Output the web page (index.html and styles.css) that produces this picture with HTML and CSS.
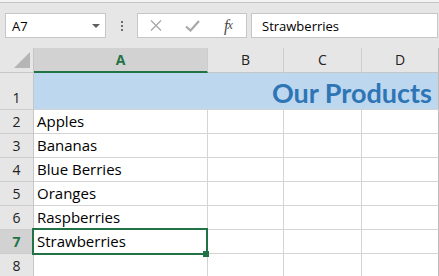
FILE: index.html
```html
<!DOCTYPE html>
<html>
<head>
<meta charset="utf-8">
<link rel="stylesheet" href="styles.css">
</head>
<body>
<div class="window">
  <div class="topline"></div>
  <div class="fbar">
    <div class="namebox">
      <span class="ref">A7</span>
      <svg class="caret" width="8" height="4" viewBox="0 0 8 4"><polygon points="0,0 8,0 4,4" fill="#5f5f5f"/></svg>
    </div>
    <div class="grip"><i></i><i></i><i></i></div>
    <div class="fxbox">
      <span class="slot">
        <svg width="12" height="11" viewBox="0 0 12 11"><path d="M1 0.5 L11 10.5 M11 0.5 L1 10.5" stroke="#a8a8a8" stroke-width="1.3" fill="none"/></svg>
      </span>
      <span class="slot">
        <svg width="15" height="12" viewBox="0 0 15 12"><path d="M1 6.5 L5.5 10.5 L14 1" stroke="#a8a8a8" stroke-width="2.2" fill="none"/></svg>
      </span>
      <span class="slot fx"><i>f</i><i class="x">x</i></span>
    </div>
    <div class="finput">Strawberries</div>
  </div>
  <div class="sheet">
    <div class="corner"><svg width="16" height="16" viewBox="0 0 16 16"><polygon points="16,0 16,16 0,16" fill="#b5b5b5"/></svg></div>
    <div class="ch sel">A</div>
    <div class="ch">B</div>
    <div class="ch">C</div>
    <div class="ch last">D</div>

    <div class="rh tall">1</div>
    <div class="title">Our Products</div>

    <div class="rh">2</div><div class="c">Apples</div><div class="c"></div><div class="c"></div><div class="c last"></div>
    <div class="rh">3</div><div class="c">Bananas</div><div class="c"></div><div class="c"></div><div class="c last"></div>
    <div class="rh">4</div><div class="c">Blue Berries</div><div class="c"></div><div class="c"></div><div class="c last"></div>
    <div class="rh">5</div><div class="c">Oranges</div><div class="c"></div><div class="c"></div><div class="c last"></div>
    <div class="rh">6</div><div class="c">Raspberries</div><div class="c"></div><div class="c"></div><div class="c last"></div>
    <div class="rh sel">7</div><div class="c">Strawberries</div><div class="c"></div><div class="c"></div><div class="c last"></div>
    <div class="rh">8</div><div class="c"></div><div class="c"></div><div class="c"></div><div class="c last"></div>

    <div class="selection"></div>
    <div class="handle"></div>
  </div>
</div>
</body>
</html>
```

FILE: styles.css
```css
* { box-sizing: border-box; }
html, body { margin: 0; padding: 0; }
body {
  width: 439px;
  height: 276px;
  overflow: hidden;
  background: #e6e6e6;
  font-family: "Open Sans", "Noto Sans", sans-serif;
}
.window { width: 439px; height: 276px; background: #e6e6e6; }
.topline {
  height: 3px;
  background: #f3f3f3;
  border-bottom: 1px solid #c4c4c4;
}
.fbar {
  display: flex;
  align-items: stretch;
  height: 45px;
  padding: 10px 1px 10px 5px;
}
.namebox {
  width: 101px;
  background: #fff;
  border: 1px solid #c6c6c6;
  display: flex;
  align-items: center;
  justify-content: space-between;
  padding: 0 5px 0 6px;
  font-size: 13px;
  color: #000;
}
.caret { display: block; }
.grip {
  width: 31px;
  display: flex;
  flex-direction: column;
  align-items: center;
  justify-content: center;
  gap: 2px;
}
.grip i {
  display: block;
  width: 2px;
  height: 2px;
  background: #6e6e6e;
}
.fxbox {
  width: 110px;
  background: #fff;
  border: 1px solid #c6c6c6;
  display: flex;
  align-items: center;
}
.slot {
  width: 36px;
  display: flex;
  justify-content: center;
  align-items: center;
}
.slot svg { display: block; }
.fx {
  font-family: "Liberation Serif", serif;
  font-size: 16px;
  color: #4a4a4a;
  letter-spacing: -1px;
}
.fx .x { font-size: 12px; }
.finput {
  flex: 1;
  margin-left: 4px;
  background: #fff;
  border: 1px solid #c6c6c6;
  font-size: 13px;
  color: #000;
  display: flex;
  align-items: center;
  padding-left: 10px;
}
.sheet {
  position: relative;
  display: grid;
  grid-template-columns: 34px 174px 76px 78px 77px;
  grid-template-rows: 25px 37px repeat(7, 24px);
  background: #fff;
}
.corner {
  background: #e6e6e6;
  border-right: 1px solid #c6c6c6;
  border-bottom: 1px solid #c6c6c6;
  display: flex;
  align-items: flex-end;
  justify-content: flex-end;
  padding: 0 3px 4px 0;
}
.corner svg { display: block; }
.ch {
  background: #e6e6e6;
  border-right: 1px solid #cdcdcd;
  border-bottom: 1px solid #c6c6c6;
  text-align: center;
  font-size: 14px;
  line-height: 24px;
  color: #222;
}
.ch.sel {
  background: #d2d2d2;
  color: #217346;
  font-weight: bold;
  border-bottom: 2px solid #217346;
  line-height: 23px;
}
.ch.last { border-right: 1px solid #bcbcbc; }
.rh {
  background: #e6e6e6;
  border-right: 1px solid #c6c6c6;
  border-bottom: 1px solid #cdcdcd;
  font-size: 14px;
  line-height: 23px;
  text-align: center;
  color: #222;
}
.rh.tall {
  display: flex;
  align-items: flex-end;
  justify-content: center;
}
.rh.sel {
  background: #d2d2d2;
  color: #217346;
  font-weight: bold;
}
.title {
  grid-column: span 4;
  background: #bdd7ee;
  border-bottom: 1px solid #d4d4d4;
  border-right: 1px solid #bcbcbc;
  display: flex;
  align-items: flex-end;
  justify-content: flex-end;
  padding-right: 6px;
  font-family: "Lato", "Open Sans", sans-serif;
  font-weight: bold;
  font-size: 27px;
  line-height: 32px;
  color: #2e75b6;
}
.c {
  border-right: 1px solid #d4d4d4;
  border-bottom: 1px solid #d4d4d4;
  font-size: 15px;
  line-height: 23px;
  padding-left: 3px;
  color: #000;
  white-space: nowrap;
}
.c.last { border-right: 1px solid #bcbcbc; }
.selection {
  position: absolute;
  left: 32px;
  top: 180px;
  width: 176px;
  height: 27px;
  border: 2px solid #217346;
}
.handle {
  position: absolute;
  left: 203px;
  top: 203px;
  width: 6px;
  height: 6px;
  background: #217346;
}
```
